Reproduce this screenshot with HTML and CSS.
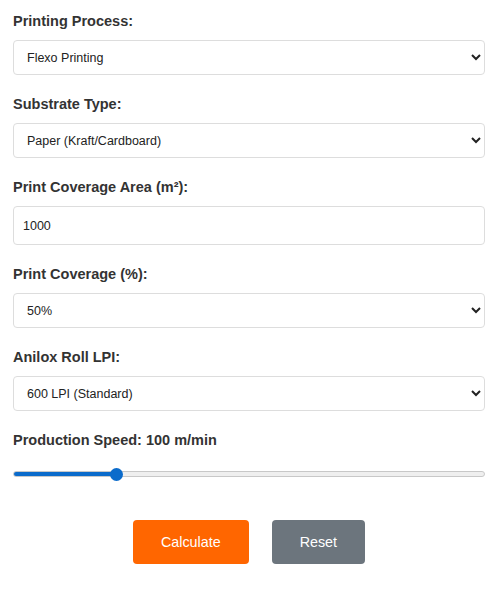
FILE: index.html
```html
<!DOCTYPE html>
<html lang="en">
<head>
  <meta charset="UTF-8" />
  <meta name="viewport" content="width=device-width, initial-scale=1.0" />
  <title>Print Ink Calculator</title>
  <link rel="stylesheet" href="styles.css">
</head>
<body>

  <form class="calc-form" id="calcForm">
    <div class="form-group">
      <label for="process">Printing Process:</label>
      <select id="process">
        <option>Flexo Printing</option>
        <option>Offset Printing</option>
        <option>Gravure Printing</option>
        <option>Screen Printing</option>
      </select>
    </div>

    <div class="form-group">
      <label for="substrate">Substrate Type:</label>
      <select id="substrate">
        <option>Paper (Kraft/Cardboard)</option>
        <option>Coated Paper</option>
        <option>Plastic Film</option>
      </select>
    </div>

    <div class="form-group">
      <label for="area">Print Coverage Area (m²):</label>
      <input type="text" id="area" value="1000" />
    </div>

    <div class="form-group">
      <label for="coverage">Print Coverage (%):</label>
      <select id="coverage">
        <option>50%</option>
        <option>25%</option>
        <option>75%</option>
        <option>100%</option>
      </select>
    </div>

    <div class="form-group">
      <label for="lpi">Anilox Roll LPI:</label>
      <select id="lpi">
        <option>600 LPI (Standard)</option>
        <option>400 LPI (Coarse)</option>
        <option>800 LPI (Fine)</option>
      </select>
    </div>

    <div class="form-group">
      <label for="speed">Production Speed: <span id="speedValue">100</span> m/min</label>
      <input type="range" id="speed" class="slider" min="20" max="400" value="100" style="--fill: 22%;" />
    </div>

    <div class="actions">
      <button type="button" class="btn btn-calc">Calculate</button>
      <button type="reset" class="btn btn-reset">Reset</button>
    </div>
  </form>

</body>
</html>
```

FILE: styles.css
```css
body {
  font-family: 'Liberation Sans', Arial, sans-serif;
  background: #fff;
  color: #222;
  margin: 0;
}

.calc-form {
  padding: 12px 15px 0 13px;
}

.form-group {
  margin-bottom: 20px;
}

.form-group label {
  display: block;
  font-size: 14.5px;
  line-height: 18px;
  font-weight: bold;
  color: #333;
  margin-bottom: 10px;
}

.form-group select,
.form-group input[type="text"] {
  display: block;
  width: 100%;
  box-sizing: border-box;
  font-family: inherit;
  font-size: 12.5px;
  color: #222;
  background: #fff;
  border: 1px solid #ddd;
  border-radius: 4px;
}

.form-group select {
  height: 35px;
  padding: 0 6px 0 9px;
}

.form-group input[type="text"] {
  height: 39px;
  padding: 0 9px;
}

.slider {
  -webkit-appearance: none;
  appearance: none;
  display: block;
  width: 100%;
  height: 6px;
  margin: 22px 0 0;
  border: 1px solid #c8c8c8;
  border-radius: 4px;
  box-sizing: border-box;
  background: linear-gradient(to right, #0b6bcb var(--fill), #efefef var(--fill));
}

.slider::-webkit-slider-thumb {
  -webkit-appearance: none;
  width: 13px;
  height: 13px;
  border-radius: 50%;
  background: #0b6bcb;
  border: none;
}

.actions {
  display: flex;
  justify-content: center;
  gap: 23px;
  margin-top: 43px;
}

.btn {
  height: 44px;
  padding: 0 28px;
  font-family: inherit;
  font-size: 14.3px;
  color: #fff;
  border: none;
  border-radius: 4px;
  cursor: pointer;
}

.btn-calc {
  background: #ff6600;
}

.btn-reset {
  background: #6c757d;
}
```
